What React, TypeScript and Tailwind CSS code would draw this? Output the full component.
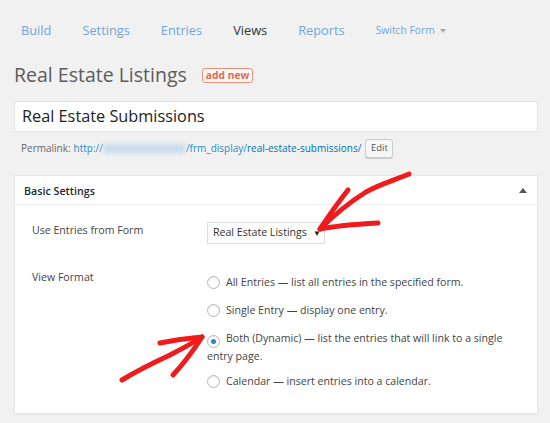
import React from "react";

const font = { fontFamily: '"Open Sans", "Noto Sans", sans-serif' };

function Radio({ checked }: { checked?: boolean }) {
  return (
    <span className="inline-flex h-[13px] w-[13px] shrink-0 items-center justify-center rounded-full border border-[#b4b9be] bg-white shadow-[inset_0_1px_2px_rgba(0,0,0,0.1)]">
      {checked && <span className="h-[5px] w-[5px] rounded-full bg-[#1e8cbe]" />}
    </span>
  );
}

export default function App() {
  return (
    <div className="relative h-[423px] w-[550px] overflow-hidden bg-[#f1f1f1]" style={font}>
      {/* Tabs */}
      <div className="flex items-center gap-[31px] pl-[21px] pt-[19px] text-[12.8px] leading-[22px] text-[#72a6d6]">
        <span>Build</span>
        <span>Settings</span>
        <span>Entries</span>
        <span className="text-[#333]">Views</span>
        <span>Reports</span>
        <span className="flex items-center gap-[5px] text-[10.3px]">
          Switch Form
          <span className="mt-[1px] h-0 w-0 border-x-[3.5px] border-t-[4px] border-x-transparent border-t-[#aaa]" />
        </span>
      </div>

      {/* Title */}
      <div className="mt-[22px] flex items-center pl-[14px]">
        <span className="text-[19.5px] leading-[24px] text-[#5b5b5b]">Real Estate Listings</span>
        <span className="ml-[15px] rounded-[3px] border border-[#e98f7a] bg-[#f7f7f7] px-[3px] text-[10.3px] font-bold leading-[13px] text-[#e56a50]">
          add new
        </span>
      </div>

      {/* Title input */}
      <div className="ml-[14px] mt-[14px] flex h-[31px] w-[524px] items-center border border-[#e2e2e2] bg-white pl-[7px] text-[16.3px] text-[#222]">
        Real Estate Submissions
      </div>

      {/* Permalink */}
      <div className="mt-[7px] flex items-center pl-[21px] text-[10px]">
        <span className="text-[#666]">Permalink:</span>
        <span className="ml-[3px] text-[#2b8acb]">http://</span>
        <span className="h-[9px] w-[83px] rounded-[4px] bg-[#c9dcea] blur-[2px]" />
        <span className="text-[#2b8acb]">/frm_display/</span>
        <span className="text-[#0073aa]">real-estate-submissions/</span>
        <span className="ml-[4px] flex h-[19px] w-[28px] items-center justify-center rounded-[3px] border border-[#ccc] bg-[#f7f7f7] text-[9.5px] text-[#555] shadow-[0_1px_0_#ccc]">
          Edit
        </span>
      </div>

      {/* Panel */}
      <div className="ml-[14px] mt-[17px] w-[524px] border border-[#e5e5e5] bg-white shadow-[0_1px_1px_rgba(0,0,0,0.04)]">
        <div className="flex h-[29px] items-center justify-between border-b border-[#eee] pl-[9px] pr-[10px]">
          <span className="mt-[2px] text-[10.7px] font-semibold text-[#23282d]">Basic Settings</span>
          <span className="h-0 w-0 border-x-[4px] border-b-[5px] border-x-transparent border-b-[#555]" />
        </div>
        <div className="pb-[23px] pl-[17px] pr-[20px] text-[10.6px] text-[#444]">
          <div className="mt-[17px] flex">
            <div className="w-[175px] pt-[1px]">Use Entries from Form</div>
            <div className="flex h-[22px] w-[118px] items-center whitespace-nowrap border border-[#ddd] pl-[5px] text-[10.6px] text-[#333]">
              Real Estate Listings
              <span className="ml-[6px] text-[8px] text-[#222]">▼</span>
            </div>
          </div>
          <div className="mt-[24px] flex">
            <div className="w-[175px] pt-[2px]">View Format</div>
            <div className="flex w-[310px] flex-col pt-[7px]">
              <div className="flex items-center gap-[6px]">
                <Radio />
                <span>All Entries — list all entries in the specified form.</span>
              </div>
              <div className="mt-[12px] flex items-center gap-[6px]">
                <Radio />
                <span>Single Entry — display one entry.</span>
              </div>
              <div className="mt-[11px] leading-[16px]">
                <span className="mr-[6px] inline-flex align-[-2px]">
                  <Radio checked />
                </span>
                Both (Dynamic) — list the entries that will link to a single entry page.
              </div>
              <div className="mt-[10px] flex items-center gap-[6px]">
                <Radio />
                <span>Calendar — insert entries into a calendar.</span>
              </div>
            </div>
          </div>
        </div>
      </div>

      {/* Red arrows overlay */}
      <svg className="pointer-events-none absolute left-0 top-0" width="550" height="423">
        <g fill="none" stroke="#ee1c1c" strokeWidth="5" strokeLinecap="round" strokeLinejoin="round">
          <path d="M409 174 C 395 180 380 184 366 192 C 350 202 333 216 320 229" />
          <path d="M348 190 C 340 200 330 214 320 229 C 335 226 360 224 378 223" />
          <path d="M122 380 C 135 372 155 362 170 355 C 182 349 194 342 202 337" />
          <path d="M160 343 C 175 340 190 338 202 337 C 195 348 185 362 173 375" />
        </g>
      </svg>
    </div>
  );
}
